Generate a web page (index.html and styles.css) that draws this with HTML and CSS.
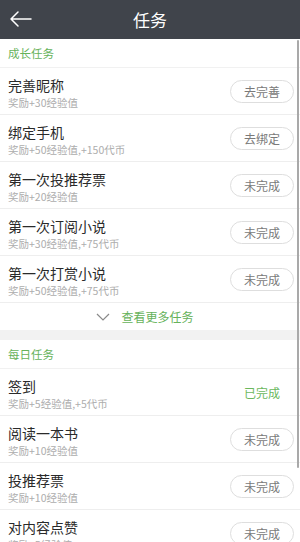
FILE: index.html
```html
<!DOCTYPE html>
<html lang="zh-CN">
<head>
<meta charset="utf-8">
<title>任务</title>
<link rel="stylesheet" href="styles.css">
</head>
<body>
<div class="page">
  <header class="topbar">
    <span class="back">
      <svg width="24" height="18" viewBox="0 0 24 18"><path d="M22 9H2M9 2L2 9l7 7" fill="none" stroke="#fff" stroke-width="1.5" stroke-linecap="round" stroke-linejoin="round"/></svg>
    </span>
    <h1 class="title">任务</h1>
  </header>

  <section class="section">
    <div class="section-head">成长任务</div>
    <div class="row">
      <div class="info"><div class="name">完善昵称</div><div class="reward">奖励+30经验值</div></div>
      <span class="btn">去完善</span>
    </div>
    <div class="row">
      <div class="info"><div class="name">绑定手机</div><div class="reward">奖励+50经验值,+150代币</div></div>
      <span class="btn">去绑定</span>
    </div>
    <div class="row">
      <div class="info"><div class="name">第一次投推荐票</div><div class="reward">奖励+20经验值</div></div>
      <span class="btn">未完成</span>
    </div>
    <div class="row">
      <div class="info"><div class="name">第一次订阅小说</div><div class="reward">奖励+30经验值,+75代币</div></div>
      <span class="btn">未完成</span>
    </div>
    <div class="row">
      <div class="info"><div class="name">第一次打赏小说</div><div class="reward">奖励+50经验值,+75代币</div></div>
      <span class="btn">未完成</span>
    </div>
    <div class="more">
      <svg class="chev" width="14" height="8" viewBox="0 0 14 8"><path d="M1 1l6 6 6-6" fill="none" stroke="#8a8a8a" stroke-width="1.2"/></svg>
      <span>查看更多任务</span>
    </div>
  </section>

  <section class="section daily">
    <div class="section-head">每日任务</div>
    <div class="row">
      <div class="info"><div class="name">签到</div><div class="reward">奖励+5经验值,+5代币</div></div>
      <span class="done">已完成</span>
    </div>
    <div class="row">
      <div class="info"><div class="name">阅读一本书</div><div class="reward">奖励+10经验值</div></div>
      <span class="btn">未完成</span>
    </div>
    <div class="row">
      <div class="info"><div class="name">投推荐票</div><div class="reward">奖励+10经验值</div></div>
      <span class="btn">未完成</span>
    </div>
    <div class="row">
      <div class="info"><div class="name">对内容点赞</div><div class="reward">奖励+5经验值</div></div>
      <span class="btn">未完成</span>
    </div>
  </section>

  <div class="scrollbar"></div>
</div>
</body>
</html>
```

FILE: styles.css
```css
* { box-sizing: border-box; }
html, body { margin: 0; padding: 0; }
body {
  width: 300px;
  height: 542px;
  overflow: hidden;
  background: #f2f2f2;
  font-family: "Noto Sans CJK SC", "Noto Sans", sans-serif;
}
.page { position: relative; width: 300px; height: 542px; overflow: hidden; }

.topbar {
  height: 39px;
  background: #40444b;
  display: flex;
  align-items: center;
  justify-content: center;
  position: relative;
}
.back {
  position: absolute;
  left: 9px;
  top: 10px;
  display: flex;
}
.title {
  margin: 0;
  font-size: 17px;
  font-weight: normal;
  color: #fff;
  line-height: 20px;
}

.section { background: #fff; }
.daily { margin-top: 10px; }

.section-head {
  height: 29px;
  padding-left: 8px;
  display: flex;
  align-items: center;
  font-size: 11.5px;
  color: #66b25a;
  border-bottom: 1px solid #f1f1f1;
}

.row {
  height: 47px;
  display: flex;
  justify-content: space-between;
  align-items: center;
  padding: 0 6px 0 8px;
  border-bottom: 1px solid #eeeeee;
}
.info {
  align-self: flex-start;
  padding-top: 8px;
}
.name {
  font-size: 14px;
  line-height: 18px;
  color: #2a2a2a;
}
.reward {
  margin-top: 1px;
  font-size: 10.5px;
  line-height: 15px;
  color: #adadad;
}
.btn {
  width: 64px;
  height: 23px;
  border: 1px solid #dedede;
  border-radius: 12px;
  display: flex;
  align-items: center;
  justify-content: center;
  font-size: 12px;
  color: #7a7a7a;
}
.done {
  font-size: 12px;
  color: #6bb85d;
  margin-right: 14px;
}

.more {
  height: 27px;
  display: flex;
  align-items: center;
  justify-content: center;
  gap: 11px;
  font-size: 12px;
  color: #66b25a;
  padding-right: 10px;
}

.scrollbar {
  position: absolute;
  right: 1px;
  top: 40px;
  width: 2px;
  height: 428px;
  background: #a9a9a9;
  border-radius: 1px;
}
```
